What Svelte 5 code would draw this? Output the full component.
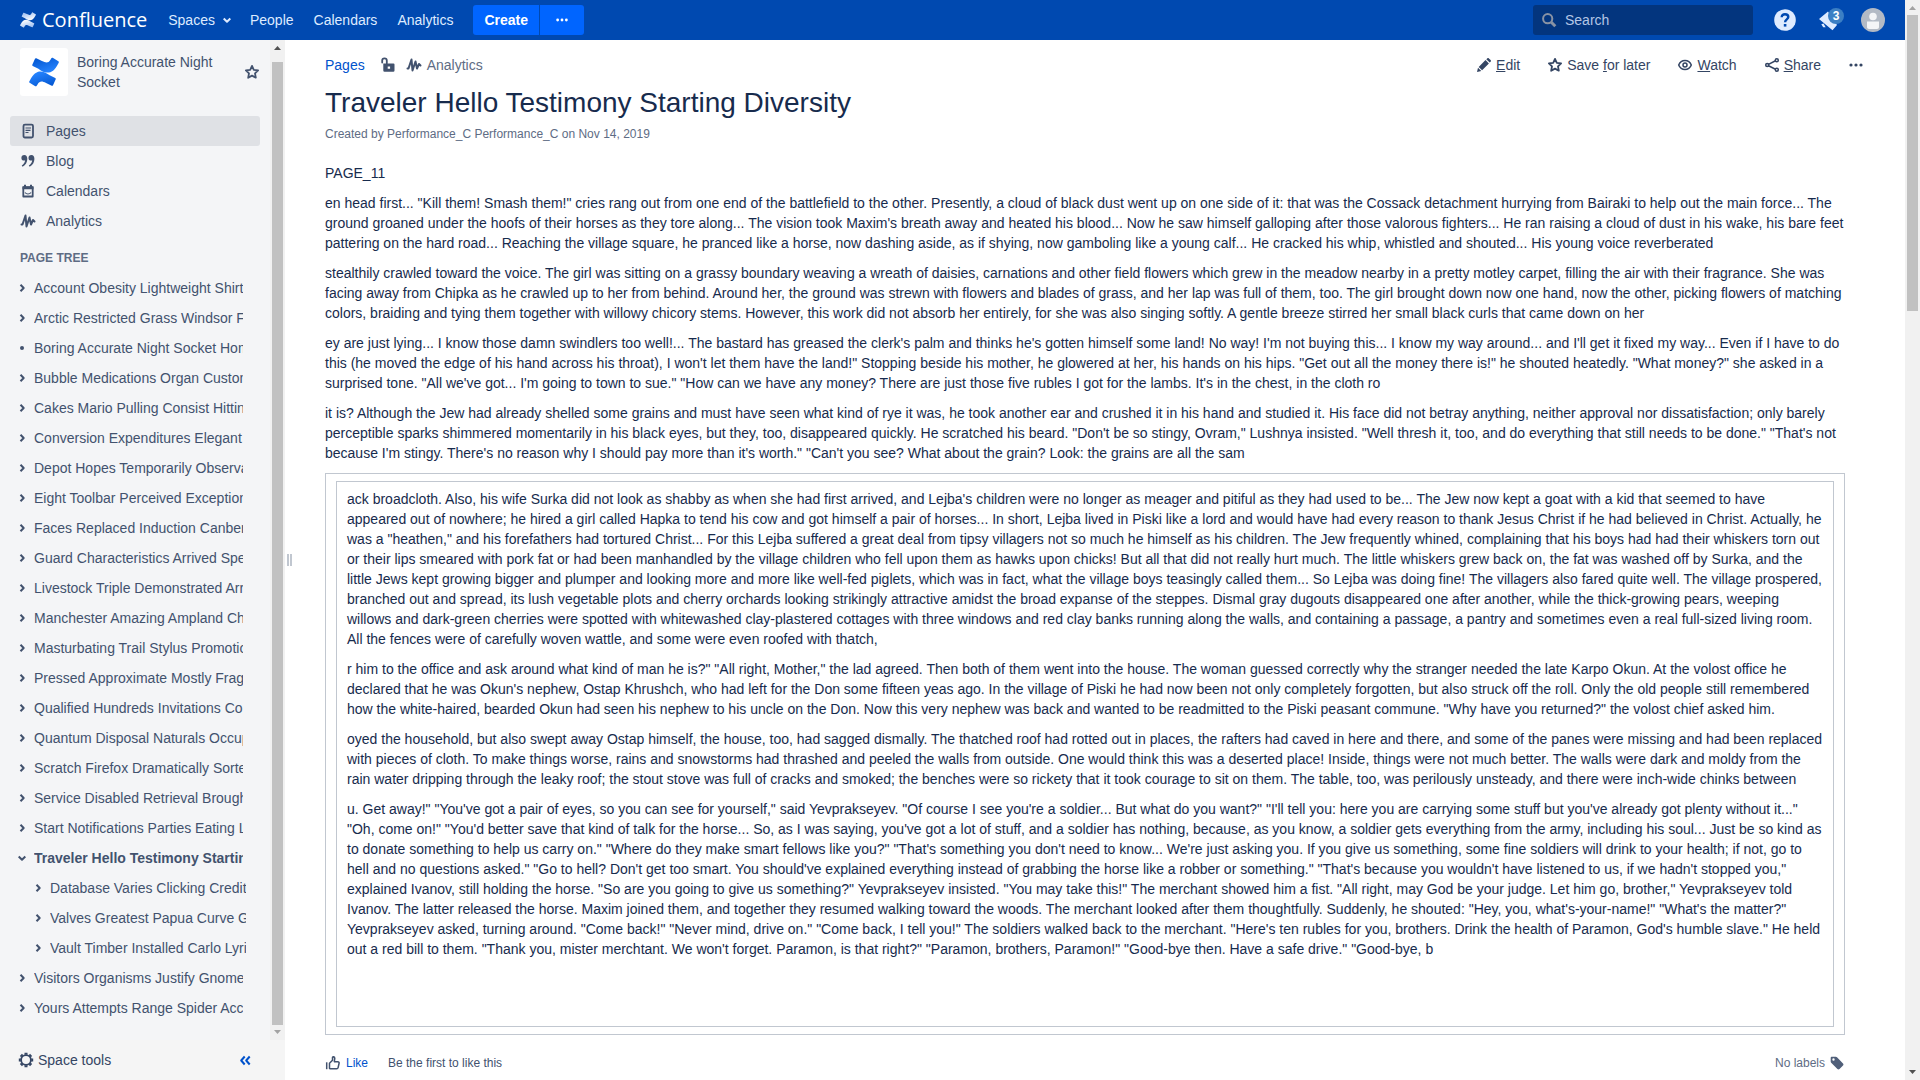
<script>
  const nav = [
    { icon: 'page', label: 'Pages', active: true },
    { icon: 'quote', label: 'Blog' },
    { icon: 'calendar', label: 'Calendars' },
    { icon: 'pulse', label: 'Analytics' },
  ];

  const tree = [
    { label: 'Account Obesity Lightweight Shirts' },
    { label: 'Arctic Restricted Grass Windsor Fabrics' },
    { label: 'Boring Accurate Night Socket Home', leaf: true },
    { label: 'Bubble Medications Organ Customs' },
    { label: 'Cakes Mario Pulling Consist Hitting' },
    { label: 'Conversion Expenditures Elegant' },
    { label: 'Depot Hopes Temporarily Observation' },
    { label: 'Eight Toolbar Perceived Exceptions' },
    { label: 'Faces Replaced Induction Canberra' },
    { label: 'Guard Characteristics Arrived Species' },
    { label: 'Livestock Triple Demonstrated Arrow' },
    { label: 'Manchester Amazing Ampland Charts' },
    { label: 'Masturbating Trail Stylus Promotion' },
    { label: 'Pressed Approximate Mostly Fragrance' },
    { label: 'Qualified Hundreds Invitations Co' },
    { label: 'Quantum Disposal Naturals Occupied' },
    { label: 'Scratch Firefox Dramatically Sorted' },
    { label: 'Service Disabled Retrieval Brought' },
    { label: 'Start Notifications Parties Eating Lunch' },
    {
      label: 'Traveler Hello Testimony Starting Diversity',
      open: true,
      children: [
        'Database Varies Clicking Credits',
        'Valves Greatest Papua Curve Guide',
        'Vault Timber Installed Carlo Lyrics',
      ],
    },
    { label: 'Visitors Organisms Justify Gnome' },
    { label: 'Yours Attempts Range Spider Accent' },
  ];

  const intro = [
    `PAGE_11`,
    `en head first... "Kill them! Smash them!" cries rang out from one end of the battlefield to the other. Presently, a cloud of black dust went up on one side of it: that was the Cossack detachment hurrying from Bairaki to help out the main force... The ground groaned under the hoofs of their horses as they tore along... The vision took Maxim's breath away and heated his blood... Now he saw himself galloping after those valorous fighters... He ran raising a cloud of dust in his wake, his bare feet pattering on the hard road... Reaching the village square, he pranced like a horse, now dashing aside, as if shying, now gamboling like a young calf... He cracked his whip, whistled and shouted... His young voice reverberated`,
    `stealthily crawled toward the voice. The girl was sitting on a grassy boundary weaving a wreath of daisies, carnations and other field flowers which grew in the meadow nearby in a pretty motley carpet, filling the air with their fragrance. She was facing away from Chipka as he crawled up to her from behind. Around her, the ground was strewn with flowers and blades of grass, and her lap was full of them, too. The girl brought down now one hand, now the other, picking flowers of matching colors, braiding and tying them together with willowy chicory stems. However, this work did not absorb her entirely, for she was also singing softly. A gentle breeze stirred her small black curls that came down on her`,
    `ey are just lying... I know those damn swindlers too well!... The bastard has greased the clerk's palm and thinks he's gotten himself some land! No way! I'm not buying this... I know my way around... and I'll get it fixed my way... Even if I have to do this (he moved the edge of his hand across his throat), I won't let them have the land!" Stopping beside his mother, he glowered at her, his hands on his hips. "Get out all the money there is!" he shouted heatedly. "What money?" she asked in a surprised tone. "All we've got... I'm going to town to sue." "How can we have any money? There are just those five rubles I got for the lambs. It's in the chest, in the cloth ro`,
    `it is? Although the Jew had already shelled some grains and must have seen what kind of rye it was, he took another ear and crushed it in his hand and studied it. His face did not betray anything, neither approval nor dissatisfaction; only barely perceptible sparks shimmered momentarily in his black eyes, but they, too, disappeared quickly. He scratched his beard. "Don't be so stingy, Ovram," Lushnya insisted. "Well thresh it, too, and do everything that still needs to be done." "That's not because I'm stingy. There's no reason why I should pay more than it's worth." "Can't you see? What about the grain? Look: the grains are all the sam`,
  ];

  const panel = [
    `ack broadcloth. Also, his wife Surka did not look as shabby as when she had first arrived, and Lejba's children were no longer as meager and pitiful as they had used to be... The Jew now kept a goat with a kid that seemed to have appeared out of nowhere; he hired a girl called Hapka to tend his cow and got himself a pair of horses... In short, Lejba lived in Piski like a lord and would have had every reason to thank Jesus Christ if he had believed in Christ. Actually, he was a "heathen," and his forefathers had tortured Christ... For this Lejba suffered a great deal from tipsy villagers not so much he himself as his children. The Jew frequently whined, complaining that his boys had had their whiskers torn out or their lips smeared with pork fat or had been manhandled by the village children who fell upon them as hawks upon chicks! But all that did not really hurt much. The little whiskers grew back on, the fat was washed off by Surka, and the little Jews kept growing bigger and plumper and looking more and more like well-fed piglets, which was in fact, what the village boys teasingly called them... So Lejba was doing fine! The villagers also fared quite well. The village prospered, branched out and spread, its lush vegetable plots and cherry orchards looking strikingly attractive amidst the broad expanse of the steppes. Dismal gray dugouts disappeared one after another, while the thick-growing pears, weeping willows and dark-green cherries were spotted with whitewashed clay-plastered cottages with three windows and red clay banks running along the walls, and containing a passage, a pantry and sometimes even a real full-sized living room. All the fences were of carefully woven wattle, and some were even roofed with thatch,`,
    `r him to the office and ask around what kind of man he is?" "All right, Mother," the lad agreed. Then both of them went into the house. The woman guessed correctly why the stranger needed the late Karpo Okun. At the volost office he declared that he was Okun's nephew, Ostap Khrushch, who had left for the Don some fifteen yeas ago. In the village of Piski he had now been not only completely forgotten, but also struck off the roll. Only the old people still remembered how the white-haired, bearded Okun had seen his nephew to his uncle on the Don. Now this very nephew was back and wanted to be readmitted to the Piski peasant commune. "Why have you returned?" the volost chief asked him.`,
    `oyed the household, but also swept away Ostap himself, the house, too, had sagged dismally. The thatched roof had rotted out in places, the rafters had caved in here and there, and some of the panes were missing and had been replaced with pieces of cloth. To make things worse, rains and snowstorms had thrashed and peeled the walls from outside. One would think this was a deserted place! Inside, things were not much better. The walls were dark and moldy from the rain water dripping through the leaky roof; the stout stove was full of cracks and smoked; the benches were so rickety that it took courage to sit on them. The table, too, was perilously unsteady, and there were inch-wide chinks between`,
    `u. Get away!" "You've got a pair of eyes, so you can see for yourself," said Yevprakseyev. "Of course I see you're a soldier... But what do you want?" "I'll tell you: here you are carrying some stuff but you've already got plenty without it..." "Oh, come on!" "You'd better save that kind of talk for the horse... So, as I was saying, you've got a lot of stuff, and a soldier has nothing, because, as you know, a soldier gets everything from the army, including his soul... Just be so kind as to donate something to help us carry on." "Where do they make smart fellows like you?" "That's something you don't need to know... We're just asking you. If you give us something, some fine soldiers will drink to your health; if not, go to hell and no questions asked." "Go to hell? Don't get too smart. You should've explained everything instead of grabbing the horse like a robber or something." "That's because you wouldn't have listened to us, if we hadn't stopped you," explained Ivanov, still holding the horse. "So are you going to give us something?" Yevprakseyev insisted. "You may take this!" The merchant showed him a fist. "All right, may God be your judge. Let him go, brother," Yevprakseyev told Ivanov. The latter released the horse. Maxim joined them, and together they resumed walking toward the woods. The merchant looked after them thoughtfully. Suddenly, he shouted: "Hey, you, what's-your-name!" "What's the matter?" Yevprakseyev asked, turning around. "Come back!" "Never mind, drive on." "Come back, I tell you!" The soldiers walked back to the merchant. "Here's ten rubles for you, brothers. Drink the health of Paramon, God's humble slave." He held out a red bill to them. "Thank you, mister merchtant. We won't forget. Paramon, is that right?" "Paramon, brothers, Paramon!" "Good-bye then. Have a safe drive." "Good-bye, b`,
  ];
</script>

{#snippet icon(name)}
  <svg class="icon" viewBox="0 0 16 16" width="16" height="16" aria-hidden="true">
    {#if name === 'page'}
      <rect x="3.5" y="1.700" width="9.500" height="12.800" rx="1.400" class="line" />
      <path d="M5.500 5h5.500M5.500 7.300h5M5.500 9.500h3" class="thin" />
    {:else if name === 'quote'}
      <path d="M4.300 2C2.400 2 1.400 3.300 1.400 4.900c0 1.700 1.100 2.700 2.600 2.700.4 0 .8-.1 1.100-.2-.3 2-1.400 3.800-3.400 5.200l.9 1.200C5.700 12 7.300 9.200 7.300 5.900 7.300 3.500 6.200 2 4.300 2zM11.400 2C9.500 2 8.500 3.300 8.500 4.900c0 1.700 1.100 2.700 2.600 2.700.4 0 .8-.1 1.100-.2-.3 2-1.400 3.800-3.400 5.200l.9 1.200c3.100-1.800 4.700-4.600 4.700-7.900C14.400 3.500 13.300 2 11.400 2z" />
    {:else if name === 'calendar'}
      <path d="M3.300 4.500h9.400v9H3.300z" class="line" />
      <path d="M2.500 3.300h11v2.900h-11zM4 1.800h2v2H4zM10 1.800h2v2h-2z" />
      <path d="M5 9.500c1.500 2 4.500 2 6 0" class="thin" />
    {:else if name === 'pulse'}
      <path d="M1.500 11.500h1L5.500 2.500 6.500 13.500 9.500 4.500 11 11.500 13 7 14.500 8.500" class="heavy round" />
    {:else if name === 'star'}
      <path d="M8 1.900l1.800 3.900 4.300.6-3.100 3 .8 4.300L8 11.600l-3.800 2.100.8-4.300-3.100-3 4.300-.6z" class="line" />
    {:else if name === 'unlock'}
      <path d="M2.200 5.500V3.600a2.300 2.300 0 0 1 4.600 0v3" class="line" />
      <path fill-rule="evenodd" d="M4 6.500h9.500a1 1 0 0 1 1 1v6a1.200 1.200 0 0 1-1.200 1.200H4.500a1.200 1.200 0 0 1-1.200-1.200v-7zM7.700 9.400v2.400h2.400V9.400z" />
    {:else if name === 'edit'}
      <path d="M1 15l1-4.300L5.300 14zM2.700 9.900l6.800-6.900 3.400 3.400-6.800 6.900zM10.300 2.200l.9-.8c.5-.5 1.200-.5 1.700 0l1.700 1.700c.5.500.5 1.200 0 1.700l-.9.800z" />
    {:else if name === 'watch'}
      <path d="M1.700 8c1.200-3 3.500-4.600 6.300-4.600S13.100 5 14.300 8c-1.200 3-3.500 4.600-6.300 4.600S2.900 11 1.700 8z" class="fine" />
      <circle cx="8" cy="8" r="2" class="fine" />
    {:else if name === 'share'}
      <path d="M4 7.700 12 3.500M4 8.500l8 4" class="fine" />
      <circle cx="3.200" cy="8.100" r="1.500" class="fine" />
      <circle cx="12.800" cy="3.200" r="1.500" class="fine hollow" />
      <circle cx="12.800" cy="12.800" r="1.500" class="fine hollow" />
    {:else if name === 'more'}
      <circle cx="3" cy="8" r="1.600" /><circle cx="8" cy="8" r="1.600" /><circle cx="13" cy="8" r="1.600" />
    {:else if name === 'gear'}
      <circle cx="8" cy="8" r="4.900" class="line" />
      <path d="M8 .8v2M8 13.200v2M.8 8h2M13.200 8h2M2.900 2.900l1.400 1.400M11.700 11.700l1.400 1.400M2.900 13.100l1.400-1.400M11.700 4.300l1.400-1.400" class="teeth" />
    {:else if name === 'collapse'}
      <path d="M7.700 4.500 4.200 8.500l3.500 4M12.700 4.500 9.200 8.500l3.500 4" class="heavy" />
    {:else if name === 'like'}
      <path d="M1.700 7.300v6.900" class="fine" />
      <path d="M4.500 13.600V8.200l3-3V2.400c0-1 2.300-1 2.300 1L9.300 6.700h3.500c1 0 1.500.8 1.300 1.600l-1 4.400c-.2.800-.7 1.100-1.400 1.100H5.500c-.6 0-1-.1-1-.2z" class="fine" />
    {:else if name === 'tag'}
      <path fill-rule="evenodd" d="M2.600 1.700h4.200c.5 0 .9.200 1.200.5l6 6.200c.6.600.6 1.500 0 2.100l-3.500 3.500c-.6.600-1.500.6-2.100 0L2.200 7.800c-.3-.3-.5-.7-.5-1.200V2.700c0-.6.400-1 .9-1zM4.500 3.300a1.200 1.200 0 1 0 0 2.400 1.200 1.200 0 0 0 0-2.400z" />
    {:else if name === 'search'}
      <circle cx="6.700" cy="6.700" r="4.600" class="heavy" />
      <path d="M10.300 10.300l4 4" class="handle" />
    {:else if name === 'down'}
      <path d="M4.700 6.500 8 9.700l3.300-3.200" class="heavy" />
    {:else if name === 'right'}
      <path d="M6.500 4.700 9.700 8l-3.200 3.300" class="heavy" />
    {:else if name === 'dot'}
      <circle cx="8" cy="8" r="2" />
    {/if}
  </svg>
{/snippet}

{#snippet mark(id, from, to, size)}
  <svg viewBox="0 0 32 32" width={size} height={size} aria-hidden="true">
    <defs>
      <linearGradient id="{id}a" x1="0" y1="0" x2=".6" y2="1">
        <stop offset="0" stop-color={from} /><stop offset="1" stop-color={to} />
      </linearGradient>
      <linearGradient id="{id}b" x1="1" y1="1" x2=".4" y2="0">
        <stop offset="0" stop-color={from} /><stop offset="1" stop-color={to} />
      </linearGradient>
    </defs>
    <path fill="url(#{id}b)" d="M1.200 24.400l-.9 1.600c-.3.500-.1 1.100.4 1.400l6 3.700c.5.300 1.100.2 1.500-.4l.9-1.500c2.400-3.900 4.800-3.500 9.100-1.400l6 2.800c.6.300 1.200 0 1.400-.5l2.900-6.400c.2-.5 0-1.100-.5-1.400l-6-2.800C13.900 13.200 6.600 13.500 1.200 24.400z" />
    <path fill="url(#{id}a)" d="M30.800 7.600l.9-1.600c.3-.5.100-1.100-.4-1.400l-6-3.700c-.5-.3-1.200-.2-1.500.4l-.9 1.500c-2.400 3.900-4.800 3.500-9.100 1.400l-6-2.800c-.6-.3-1.200 0-1.400.5L3.500 8.300c-.2.500 0 1.100.5 1.400l6 2.800c8.100 6.300 15.400 6 20.800-4.900z" />
  </svg>
{/snippet}

{#snippet arrow(up)}
  <svg class="arrow" viewBox="0 0 15 15" width="15" height="15" aria-hidden="true">
    <path d={up ? 'M4 10h7L7.500 6z' : 'M4 5h7L7.500 9z'} />
  </svg>
{/snippet}

<div class="app">
  <div class="page">
    <header>
      <a class="brand" href="#home">{@render mark('w', '#8fb5ef', '#ffffff', 16)}<span>Confluence</span></a>
      <nav class="top">
        <a href="#spaces">Spaces{@render icon('down')}</a>
        <a href="#people">People</a>
        <a href="#calendars">Calendars</a>
        <a href="#analytics">Analytics</a>
      </nav>
      <div class="create">
        <button type="button">Create</button>
        <button type="button" aria-label="Create from template">{@render icon('more')}</button>
      </div>
      <label class="search">
        {@render icon('search')}
        <input type="text" placeholder="Search" aria-label="Search" />
      </label>
      <button class="tool" type="button" aria-label="Help">
        <svg viewBox="0 0 24 24" width="24" height="24">
          <circle cx="12" cy="12" r="10.800" />
          <path class="ask" d="M8.700 9.300c0-2 1.400-3.100 3.300-3.100s3.300 1.100 3.300 2.900c0 2.200-3.200 2.500-3.200 5.100" />
          <rect class="askdot" x="10.800" y="16" width="2.600" height="2.600" />
        </svg>
      </button>
      <button class="tool notify" type="button" aria-label="Notifications">
        <svg viewBox="0 0 24 24" width="24" height="24">
          <path d="M2 11 11 3.500 20 17l-4.500 5.200zM4.300 16.200l2.200-.6 2.200 3.600H6.200z" />
        </svg>
        <span class="badge">3</span>
      </button>
      <button class="tool" type="button" aria-label="Profile">
        <svg class="avatar" viewBox="0 0 24 24" width="24" height="24">
          <circle cx="12" cy="12" r="12" />
          <circle class="pale" cx="12" cy="8.500" r="3.800" />
          <path class="pale" d="M6 13.500h12v5.500c0 1-.8 2-2 2H8c-1.200 0-2-1-2-2z" />
        </svg>
      </button>
    </header>

    <div class="body">
      <aside>
        <div class="scroller">
          <div class="side">
            <div class="space">
              <a class="logo" href="#space" aria-label="Space home">{@render mark('s', '#0052cc', '#2684ff', 30)}</a>
              <a class="name" href="#space">Boring Accurate Night Socket</a>
              <button type="button" aria-label="Add to my spaces">{@render icon('star')}</button>
            </div>
            <ul class="nav">
              {#each nav as item}
                <li><a href="#{item.label}" class:active={item.active}>{@render icon(item.icon)}{item.label}</a></li>
              {/each}
            </ul>
            <h2>PAGE TREE</h2>
            <ul class="tree">
              {#each tree as node}
                <li>
                  <div class="row">
                    <button type="button" aria-label="Toggle {node.label}">{@render icon(node.leaf ? 'dot' : node.open ? 'down' : 'right')}</button>
                    <a href="#page" class:current={node.open}>{node.label}</a>
                  </div>
                  {#if node.children}
                    <ul>
                      {#each node.children as child}
                        <li class="row">
                          <button type="button" aria-label="Toggle {child}">{@render icon('right')}</button>
                          <a href="#page">{child}</a>
                        </li>
                      {/each}
                    </ul>
                  {/if}
                </li>
              {/each}
            </ul>
          </div>
          <div class="bar inner">{@render arrow(true)}<div class="thumb"></div>{@render arrow(false)}</div>
        </div>
        <div class="tools">
          <button type="button">{@render icon('gear')}Space tools</button>
          <button type="button" class="fold" aria-label="Collapse sidebar">{@render icon('collapse')}</button>
        </div>
      </aside>
      <div class="grip"><span></span></div>

      <main>
        <div class="bartop">
          <a class="crumb" href="#pages">Pages</a>
          <button type="button" class="lock" aria-label="Unrestricted">{@render icon('unlock')}</button>
          <a class="stats" href="#analytics">{@render icon('pulse')}Analytics</a>
          <div class="actions">
            <a href="#edit">{@render icon('edit')}<span><u>E</u>dit</span></a>
            <a href="#save">{@render icon('star')}<span>Save <u>f</u>or later</span></a>
            <a href="#watch">{@render icon('watch')}<span><u>W</u>atch</span></a>
            <a href="#share">{@render icon('share')}<span><u>S</u>hare</span></a>
            <button type="button" aria-label="More actions">{@render icon('more')}</button>
          </div>
        </div>
        <article>
          <h1>Traveler Hello Testimony Starting Diversity</h1>
          <p class="meta">Created by Performance_C Performance_C on Nov 14, 2019</p>
          {#each intro as text}<p>{text}</p>{/each}
          <div class="outer">
            <div class="box">
              {#each panel as text}<p>{text}</p>{/each}
            </div>
          </div>
          <footer>
            <button type="button" class="like">{@render icon('like')}Like</button>
            <span>Be the first to like this</span>
            <span class="labels">No labels{@render icon('tag')}</span>
          </footer>
        </article>
      </main>
    </div>
  </div>
  <div class="bar outerbar">{@render arrow(true)}<div class="thumb"></div>{@render arrow(false)}</div>
</div>

<style>
  :global(body) { margin: 0; overflow: hidden; }
  .app {
    display: flex;
    height: 100vh;
    overflow: hidden;
    background: #fff;
    color: #172b4d;
    font: 14px/20px "Liberation Sans", Arial, sans-serif;
  }
  a { color: inherit; text-decoration: none; }
  button {
    display: flex;
    align-items: center;
    padding: 0;
    border: 0;
    background: none;
    color: inherit;
    font: inherit;
    cursor: pointer;
  }
  ul { margin: 0; padding: 0; list-style: none; }
  svg { display: block; flex: none; }
  .icon { fill: currentColor; }
  .line, .fine, .thin, .heavy, .teeth, .handle { fill: none; stroke: currentColor; stroke-linejoin: round; }
  .line { stroke-width: 1.8; stroke-linecap: round; }
  .fine { stroke-width: 1.5; }
  .hollow { fill: #fff; }
  .thin { stroke-width: 1.2; }
  .heavy { stroke-width: 2; }
  .round { stroke-linecap: round; }
  .teeth { stroke-width: 3; }
  .handle { stroke-width: 3; }

  .page { display: flex; flex: 1; flex-direction: column; min-width: 0; }
  header {
    display: flex;
    flex: none;
    align-items: center;
    height: 40px;
    padding: 0 20px;
    background: #0049b0;
    color: #deebff;
  }
  .brand { display: flex; align-items: center; gap: 6px; color: #fff; font: 20px/40px "Open Sans", sans-serif; }
  .top { display: flex; gap: 20px; margin-left: 21px; }
  .top a { display: flex; align-items: center; gap: 4px; }
  .top a:first-child { margin-right: -5px; }
  .create { display: flex; gap: 1px; margin-left: 20px; color: #fff; }
  .create button { height: 30px; padding: 0 10px; background: #0065ff; font-weight: 700; }
  .create button:first-child { padding: 0 11px; border-radius: 3px 0 0 3px; }
  .create button:last-child { padding: 0 15px; border-radius: 0 3px 3px 0; }
  .create .icon { width: 14px; }
  .search {
    display: flex;
    align-items: center;
    gap: 8px;
    box-sizing: border-box;
    width: 220px;
    height: 30px;
    margin: 0 20px 0 auto;
    padding: 0 8px;
    border-radius: 3px;
    background: #03357e;
    color: #8993a4;
  }
  .search input { flex: 1; min-width: 0; padding: 0; border: 0; outline: 0; background: none; color: #fff; font: inherit; }
  .search input::placeholder { color: #b3c6e5; opacity: 1; }
  .tool { position: relative; fill: #deebff; margin-right: 20px; }
  .tool:last-child { margin-right: 0; }
  .ask { fill: none; stroke: #0049b0; stroke-width: 2.4; }
  .askdot { fill: #0049b0; }
  .badge {
    position: absolute;
    top: 0;
    left: 11px;
    width: 16px;
    height: 16px;
    border-radius: 8px;
    background: #3b7fc4;
    color: #fff;
    font-size: 12px;
    font-weight: 700;
    line-height: 16px;
    text-align: center;
  }
  .avatar { fill: #b3bac5; }
  .pale { fill: #f4f5f7; }

  .body { display: flex; flex: 1; min-height: 0; }
  aside { display: flex; flex: none; flex-direction: column; width: 285px; background: #f4f5f7; color: #42526e; }
  .scroller { display: flex; flex: 1; min-height: 0; }
  .side { flex: 1; min-width: 0; padding: 8px 10px 0; overflow: hidden; }
  .space { display: flex; align-items: center; padding: 0 0 0 10px; }
  .logo { display: flex; align-items: center; justify-content: center; width: 48px; height: 48px; border-radius: 3px; background: #fff; }
  .name { flex: 1; margin: 0 16px 0 9px; }
  .nav { margin-top: 20px; }
  .nav a { display: flex; align-items: center; gap: 10px; height: 30px; padding: 0 10px; border-radius: 3px; }
  .nav .active { background: #dfe1e5; }
  h2 { margin: 12px 0 5px; padding: 0 10px; color: #5e6c84; font-size: 12px; line-height: 20px; }
  .row { display: flex; align-items: center; height: 30px; padding: 0 17px 0 4px; }
  .row a { flex: 1; min-width: 0; margin-left: 4px; overflow: hidden; white-space: nowrap; }
  .row .current { font-weight: 700; }
  .tree ul .row { padding: 0 14px 0 20px; }
  .tools { display: flex; flex: none; justify-content: space-between; height: 40px; padding: 0 32px 0 18px; background: #f5f5f5; color: #344563; }
  .tools button { gap: 4px; }
  .fold { color: #0052cc; }
  .grip { display: flex; flex: none; align-items: center; width: 10px; }
  .grip span { width: 1px; height: 12px; margin-left: 2px; border: solid #c1c7d0; border-width: 0 2px; }

  .bar { display: flex; flex: none; flex-direction: column; width: 15px; background: #f1f1f1; }
  .bar .thumb { margin: 0 2px; background: #c1c1c1; }
  .arrow { fill: #505050; }
  .inner .thumb { flex: 1; margin-top: 7px; }
  .inner .arrow:last-child { fill: #a3a3a3; }
  .outerbar { justify-content: space-between; }
  .outerbar .arrow:first-child { fill: #a3a3a3; }
  .outerbar .thumb { height: 296px; margin-bottom: auto; }

  main { flex: 1; min-width: 0; padding: 15px 30px 0; }
  .bartop { display: flex; align-items: center; height: 20px; }
  .crumb { color: #0052cc; }
  .lock { margin-left: 15px; color: #42526e; }
  .stats { display: flex; align-items: center; gap: 5px; margin-left: 10px; color: #5e6c84; }
  .stats .icon { color: #42526e; }
  .actions { display: flex; gap: 27px; margin-left: auto; padding-right: 11px; color: #344563; }
  .actions a { display: flex; align-items: center; gap: 4px; }
  article { padding: 0 30px 0 0; }
  h1 { margin: 12px 0 0; font-size: 28px; font-weight: 400; line-height: 32px; }
  p { margin: 10px 0 0; }
  p.meta { margin: 5px 0 19px; color: #5e6c84; font-size: 12px; }
  .outer { margin-top: 10px; padding: 7px 10px; border: 1px solid #c1c7d0; }
  .box { min-height: 528px; padding: 7px 10px 9px; border: 1px solid #c1c7d0; }
  .box p:first-child { margin-top: 0; }
  footer { display: flex; align-items: center; gap: 20px; margin-top: 18px; color: #42526e; font-size: 12px; }
  .like { gap: 5px; color: #0052cc; }
  .like .icon { color: #42526e; }
  .labels { display: flex; align-items: center; gap: 4px; margin-left: auto; color: #5e6c84; }
  .labels .icon { color: #505f79; }
</style>
